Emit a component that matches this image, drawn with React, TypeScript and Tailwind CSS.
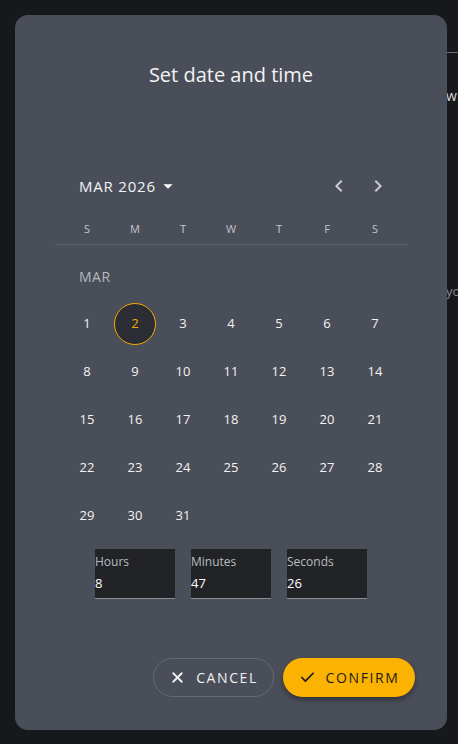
import { Check, X } from "lucide-react";

const days = ["S", "M", "T", "W", "T", "F", "S"];

// March 2026 starts on a Sunday
const weeks: (number | null)[][] = [
  [1, 2, 3, 4, 5, 6, 7],
  [8, 9, 10, 11, 12, 13, 14],
  [15, 16, 17, 18, 19, 20, 21],
  [22, 23, 24, 25, 26, 27, 28],
  [29, 30, 31, null, null, null, null],
];

const selected = 2;

function Chevron({ dir }: { dir: "left" | "right" }) {
  return (
    <svg viewBox="0 0 24 24" className="h-6 w-6 fill-[#c9cbd0]">
      {dir === "left" ? (
        <path d="M15.41 7.41 14 6l-6 6 6 6 1.41-1.41L10.83 12z" />
      ) : (
        <path d="M10 6 8.59 7.41 13.17 12l-4.58 4.59L10 18l6-6z" />
      )}
    </svg>
  );
}

function TimeField({ label, value }: { label: string; value: string }) {
  return (
    <div className="flex h-[50px] w-[80px] flex-col border-b border-[#8b8e95] bg-[#222327]">
      <span className="mt-[5px] text-[12px] leading-[16px] text-[#b9bbc1]">{label}</span>
      <span className="mt-[5px] text-[13px] leading-[16px] text-white">{value}</span>
    </div>
  );
}

export default function App() {
  return (
    <div className="relative h-[744px] w-[458px] overflow-hidden bg-[#17181c] font-['Open_Sans',sans-serif]">
      {/* page content behind the dialog */}
      <div className="absolute left-[447px] right-0 top-[52px] h-px bg-[#6b6e74]" />
      <div className="absolute left-[446px] top-[86px] flex items-center text-[14px] leading-[20px] text-[#d8d9dc]">
        <span>w</span>
        <span className="ml-px h-[14px] w-[3px] bg-[#3b82c4]" />
      </div>
      <div className="absolute left-[446px] top-[281px] text-[13px] leading-[20px] text-[#8a8c92]">
        yo
      </div>

      <div className="relative m-[15px] flex h-[715px] w-[432px] flex-col rounded-[13px] bg-[#4a4e58] px-[40px] pb-[33px] pt-[48px]">
        <h2 className="text-center text-[20px] leading-[24px] text-[#f2f3f5]">
          Set date and time
        </h2>

        <div className="mt-[79px] flex h-[40px] items-center justify-between pl-[24px] pr-[17px]">
          <div className="flex items-center text-[15px] font-medium tracking-[0.8px] text-[#f2f3f5]">
            MAR 2026
            <svg viewBox="0 0 24 24" className="ml-[1px] h-[22px] w-[22px] fill-white">
              <path d="M7 10l5 5 5-5z" />
            </svg>
          </div>
          <div className="flex items-center gap-[15px]">
            <Chevron dir="left" />
            <Chevron dir="right" />
          </div>
        </div>

        <div className="mt-[10px] border-b border-[#5f636c] px-[8px]">
          <div className="grid h-[28px] grid-cols-7 items-center pb-[2px]">
            {days.map((d, i) => (
              <span key={i} className="text-center text-[11px] font-medium text-[#c3c5ca]">
                {d}
              </span>
            ))}
          </div>
        </div>

        <div className="h-[55px] pl-[24px] pt-[24px] text-[14px] leading-[16px] font-medium tracking-[0.5px] text-[#b6b8be]">
          MAR
        </div>

        <div className="px-[8px]">
          {weeks.map((week, wi) => (
            <div key={wi} className="grid h-[48px] grid-cols-7">
              {week.map((n, di) => (
                <div key={di} className="flex items-center justify-center">
                  {n === null ? null : n === selected ? (
                    <span className="flex h-[42px] w-[42px] items-center justify-center rounded-full border border-[#f5a800] bg-[#2a2d34] text-[13px] font-medium text-[#f5a800]">
                      {n}
                    </span>
                  ) : (
                    <span className="text-[13px] font-medium text-[#f2f3f5]">{n}</span>
                  )}
                </div>
              ))}
            </div>
          ))}
        </div>

        <div className="mt-[9px] flex justify-center gap-[16px]">
          <TimeField label="Hours" value="8" />
          <TimeField label="Minutes" value="47" />
          <TimeField label="Seconds" value="26" />
        </div>

        <div className="mr-[-8px] mt-auto flex justify-end gap-[9px]">
          <button className="flex h-[39px] w-[121px] items-center justify-center gap-[10px] rounded-full border border-[#666a74] text-[14px] font-medium tracking-[1.6px] text-[#eef0f2]">
            <X className="h-[17px] w-[17px]" strokeWidth={2.6} />
            CANCEL
          </button>
          <button className="flex h-[39px] w-[132px] items-center justify-center gap-[10px] rounded-full bg-[#fbb200] text-[14px] tracking-[1.6px] text-[#1c1c1e] shadow-[0_3px_5px_rgba(0,0,0,0.35)]">
            <Check className="h-[17px] w-[17px]" strokeWidth={2.4} />
            CONFIRM
          </button>
        </div>
      </div>
    </div>
  );
}
